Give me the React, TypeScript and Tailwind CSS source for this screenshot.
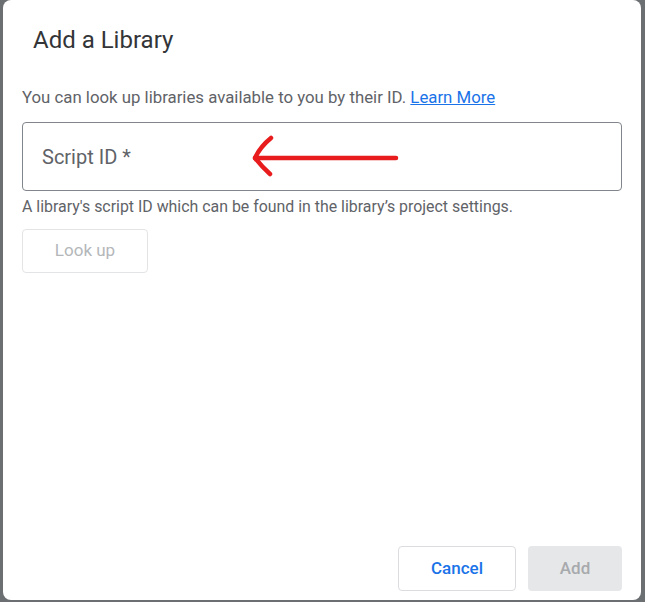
export default function App() {
  return (
    <div className="h-[602px] w-[645px] bg-[#6c6f72] pl-[3px] pr-[4px] pb-[2px] overflow-hidden" style={{ fontFamily: "Roboto, 'Liberation Sans', sans-serif" }}>
      <div className="h-full bg-white rounded-[8px] flex flex-col pl-[19px] pr-[19px]">
        <h1 className="pl-[11px] pt-[25px] text-[24px] leading-[30px] text-[#333538]">Add a Library</h1>
        <p className="mt-[32px] text-[16.8px] leading-[20px] text-[#5f6368]">
          You can look up libraries available to you by their ID.{" "}
          <a href="#" className="text-[#1a73e8] underline">Learn More</a>
        </p>
        <div className="mt-[15px] h-[69px] border border-[#80868b] rounded-[4px] flex items-center pl-[19px] relative">
          <span className="text-[20px] text-[#5f6368]">Script ID *</span>
          <svg className="absolute left-[227px] top-[12px]" width="150" height="46" viewBox="0 0 150 46">
            <path d="M5 23 L146 23" stroke="#e81c1c" strokeWidth="4.5" strokeLinecap="round" fill="none" />
            <path d="M21 3 Q10 12 5 23 Q12 32 20 39" stroke="#e81c1c" strokeWidth="4.5" strokeLinecap="round" strokeLinejoin="round" fill="none" />
          </svg>
        </div>
        <p className="mt-[7px] text-[15.9px] leading-[18px] text-[#5f6368]">
          A library's script ID which can be found in the library’s project settings.
        </p>
        <div className="mt-[13px]">
          <button className="w-[126px] h-[44px] border border-[#e3e4e5] rounded-[4px] text-[17px] text-[#b4b7ba]">Look up</button>
        </div>
        <div className="mt-auto mb-[9px] flex justify-end gap-[12px]">
          <button className="w-[118px] h-[45px] border border-[#dadce0] rounded-[4px] text-[17px] font-medium text-[#1a73e8]">Cancel</button>
          <button className="w-[94px] h-[45px] bg-[#e6e7e8] rounded-[4px] text-[17px] font-medium text-[#a7aaad]">Add</button>
        </div>
      </div>
    </div>
  );
}
